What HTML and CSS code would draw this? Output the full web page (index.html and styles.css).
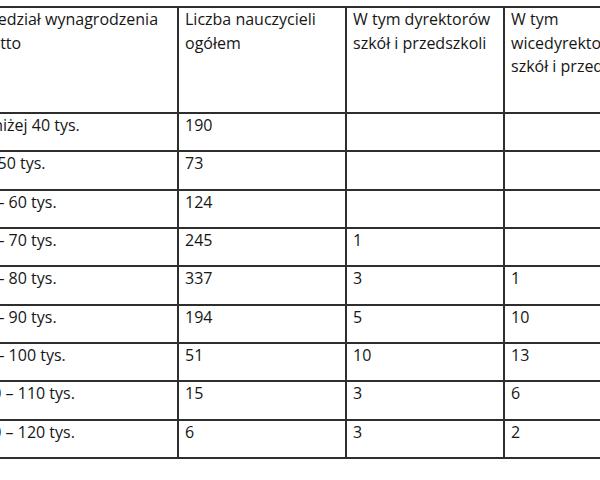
FILE: index.html
```html
<!DOCTYPE html>
<html lang="pl">
<head>
<meta charset="utf-8">
<title>Tabela wynagrodzeń</title>
<link rel="stylesheet" href="styles.css">
</head>
<body>
<table class="grid">
  <colgroup>
    <col class="c1"><col class="c2"><col class="c3"><col class="c4">
  </colgroup>
  <thead>
    <tr class="head">
      <td>Przedział wynagrodzenia<br>brutto</td>
      <td>Liczba nauczycieli<br>ogółem</td>
      <td>W tym dyrektorów<br>szkół i przedszkoli</td>
      <td>W tym<br>wicedyrektorów<br>szkół i przedszkoli</td>
    </tr>
  </thead>
  <tbody>
    <tr><td>Poniżej 40 tys.</td><td>190</td><td></td><td></td></tr>
    <tr><td>do 50 tys.</td><td>73</td><td></td><td></td></tr>
    <tr><td>50 – 60 tys.</td><td>124</td><td></td><td></td></tr>
    <tr><td>60 – 70 tys.</td><td>245</td><td>1</td><td></td></tr>
    <tr><td>70 – 80 tys.</td><td>337</td><td>3</td><td>1</td></tr>
    <tr><td>80 – 90 tys.</td><td>194</td><td>5</td><td>10</td></tr>
    <tr><td>90 – 100 tys.</td><td>51</td><td>10</td><td>13</td></tr>
    <tr><td>100 – 110 tys.</td><td>15</td><td>3</td><td>6</td></tr>
    <tr><td>110 – 120 tys.</td><td>6</td><td>3</td><td>2</td></tr>
  </tbody>
</table>
</body>
</html>
```

FILE: styles.css
```css
html, body {
  margin: 0;
  padding: 0;
  background: #ffffff;
  overflow: hidden;
}

body {
  font-family: "Open Sans", Lato, sans-serif;
  font-size: 16px;
  line-height: 23.5px;
  color: #161616;
}

.grid {
  border-collapse: collapse;
  table-layout: fixed;
  width: 698px;
  margin: 6px 0 0 -34px;
}

.c1 { width: 211px; }
.c2 { width: 168px; }
.c3 { width: 158px; }
.c4 { width: 161px; }

.grid td {
  border: 2px solid #2e2e2e;
  padding: 0 6px;
  vertical-align: top;
  height: 36.33px;
  white-space: nowrap;
  overflow: hidden;
}

.grid .head td {
  height: 104px;
}
```
